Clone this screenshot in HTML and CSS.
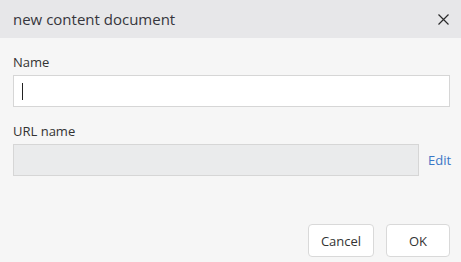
FILE: index.html
```html
<!DOCTYPE html>
<html>
<head>
<meta charset="utf-8">
<link rel="stylesheet" href="styles.css">
</head>
<body>
<div class="dialog">
  <div class="header">
    <span class="title">new content document</span>
    <svg class="close" width="11" height="11" viewBox="0 0 11 11"><path d="M0.5 0.5L10.5 10.5M10.5 0.5L0.5 10.5" stroke="#2b2b2b" stroke-width="1.2" fill="none"/></svg>
  </div>
  <div class="content">
    <label class="label">Name</label>
    <div class="input"><span class="caret"></span></div>
    <label class="label label-url">URL name</label>
    <div class="url-row">
      <div class="input input-disabled"></div>
      <a class="edit">Edit</a>
    </div>
    <div class="footer">
      <button class="btn btn-cancel">Cancel</button>
      <button class="btn btn-ok">OK</button>
    </div>
  </div>
</div>
</body>
</html>
```
FILE: styles.css
```css
html, body {
  margin: 0;
  padding: 0;
}
body {
  background: #f6f6f6;
  font-family: "Open Sans", "Noto Sans", sans-serif;
  color: #333;
  width: 461px;
  height: 262px;
  overflow: hidden;
}
.dialog {
  display: flex;
  flex-direction: column;
  height: 262px;
}
.header {
  height: 38px;
  background: #e7e7e9;
  display: flex;
  align-items: center;
  justify-content: space-between;
  padding: 0 12px 0 13px;
  flex-shrink: 0;
}
.title {
  font-size: 15px;
  color: #36363c;
}
.close {
  display: block;
  margin-top: 1px;
}
.content {
  flex: 1;
  display: flex;
  flex-direction: column;
  padding: 15px 11px 5px 13px;
}
.label {
  display: block;
  font-size: 13px;
  line-height: 18px;
  margin-bottom: 4px;
  color: #333;
}
.label-url {
  margin-top: 15px;
}
.input {
  box-sizing: border-box;
  height: 32px;
  border: 1px solid #d6d6d6;
  background: #fff;
  display: flex;
  align-items: center;
  padding-left: 8px;
}
.caret {
  display: block;
  width: 1px;
  height: 17px;
  background: #222;
}
.url-row {
  display: flex;
  align-items: center;
  gap: 9px;
}
.input-disabled {
  flex: 1;
  background: #eaebec;
}
.edit {
  font-size: 13px;
  color: #3a77c6;
  width: 22px;
}
.footer {
  margin-top: auto;
  display: flex;
  justify-content: flex-end;
  gap: 12px;
}
.btn {
  box-sizing: border-box;
  height: 33px;
  background: #fff;
  border: 1px solid #d9d9d9;
  border-radius: 4px;
  font-family: "Open Sans", "Noto Sans", sans-serif;
  font-size: 13px;
  color: #333;
  padding: 0;
}
.btn-cancel {
  width: 66px;
}
.btn-ok {
  width: 64px;
}
```
